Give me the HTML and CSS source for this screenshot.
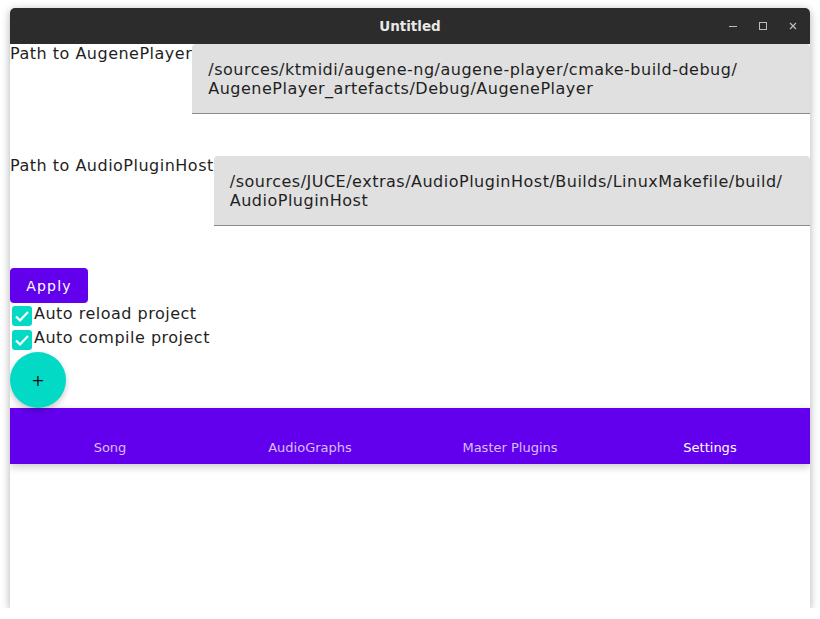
FILE: index.html
```html
<!DOCTYPE html>
<html>
<head>
<meta charset="utf-8">
<title>Untitled</title>
<link rel="stylesheet" href="styles.css">
</head>
<body>
<div class="window">
  <div class="titlebar">
    <span class="title">Untitled</span>
    <div class="controls">
      <svg class="ctl" width="10" height="10" viewBox="0 0 10 10"><path d="M1 5.5h8" stroke="#bdbdbd" stroke-width="1"/></svg>
      <svg class="ctl" width="10" height="10" viewBox="0 0 10 10"><rect x="1.5" y="1.5" width="7" height="7" fill="none" stroke="#bdbdbd" stroke-width="1"/></svg>
      <svg class="ctl" width="10" height="10" viewBox="0 0 10 10"><path d="M2 2l6 6M8 2l-6 6" stroke="#bdbdbd" stroke-width="1.2"/></svg>
    </div>
  </div>
  <div class="content">
    <div class="row">
      <div class="label">Path to AugenePlayer</div>
      <div class="field">/sources/ktmidi/augene-ng/augene-player/cmake-build-debug/<br>AugenePlayer_artefacts/Debug/AugenePlayer</div>
    </div>
    <div class="row">
      <div class="label">Path to AudioPluginHost</div>
      <div class="field">/sources/JUCE/extras/AudioPluginHost/Builds/LinuxMakefile/build/<br>AudioPluginHost</div>
    </div>
    <button class="apply">Apply</button>
    <div class="check"><span class="box"><svg width="20" height="20" viewBox="0 0 20 20"><path d="M4 10.5l4 4 8-8.5" fill="none" stroke="#fff" stroke-width="2.2"/></svg></span>Auto reload project</div>
    <div class="check"><span class="box"><svg width="20" height="20" viewBox="0 0 20 20"><path d="M4 10.5l4 4 8-8.5" fill="none" stroke="#fff" stroke-width="2.2"/></svg></span>Auto compile project</div>
    <div class="fab">+</div>
    <nav class="tabs">
      <div class="tab">Song</div>
      <div class="tab">AudioGraphs</div>
      <div class="tab">Master Plugins</div>
      <div class="tab active">Settings</div>
    </nav>
  </div>
</div>
</body>
</html>
```
FILE: styles.css
```css
html, body {
  margin: 0;
  padding: 0;
  background: #ffffff;
}
body {
  font-family: "DejaVu Sans", sans-serif;
  padding: 8px 10px 0 10px;
}
.window {
  width: 800px;
  height: 600px;
  background: #ffffff;
  border-radius: 5px 5px 0 0;
  box-shadow: 0 2px 8px rgba(0,0,0,0.32);
  overflow: hidden;
  display: flex;
  flex-direction: column;
}
.titlebar {
  height: 36px;
  background: #2c2c2c;
  display: flex;
  align-items: center;
  justify-content: center;
  position: relative;
  flex: none;
}
.title {
  color: #e8e8e8;
  font-weight: bold;
  font-size: 13.5px;
}
.controls {
  position: absolute;
  right: 12px;
  top: 13px;
  display: flex;
  gap: 20px;
}
.ctl { display: block; }
.content {
  flex: 1;
  display: flex;
  flex-direction: column;
  align-items: flex-start;
  color: #1f1f1f;
  letter-spacing: 0.5px;
}
.row {
  display: flex;
  width: 100%;
  margin-bottom: 42px;
}
.label {
  font-size: 16px;
  line-height: 19px;
  white-space: nowrap;
}
.field {
  flex: 1;
  background: #e0e0e0;
  border-radius: 4px 4px 0 0;
  border-bottom: 1px solid #8a8a8a;
  font-size: 16px;
  line-height: 19px;
  padding: 16px 16px 15px 16px;
  color: #1f1f1f;
}
.apply {
  font-family: "DejaVu Sans", sans-serif;
  background: #6200ee;
  color: #ffffff;
  border: none;
  border-radius: 4px;
  font-size: 14px;
  letter-spacing: 1.2px;
  width: 78px;
  height: 35px;
  padding: 0;
  margin: 0 0 1px 0;
}
.check {
  display: flex;
  align-items: flex-start;
  height: 24px;
  font-size: 16px;
  line-height: 19px;
  padding-left: 2px;
}
.box {
  width: 20px;
  height: 20px;
  background: #03dac6;
  border-radius: 3px;
  margin: 2px 2px 0 0;
  display: flex;
}
.fab {
  width: 56px;
  height: 56px;
  border-radius: 50%;
  background: #03dac6;
  display: flex;
  align-items: center;
  justify-content: center;
  font-size: 16px;
  color: #111;
  box-shadow: 0 3px 6px rgba(0,0,0,0.22);
  position: relative;
  z-index: 1;
  letter-spacing: 0;
}
.tabs {
  width: 100%;
  height: 56px;
  background: #6200ee;
  display: grid;
  grid-template-columns: repeat(4, 1fr);
  box-shadow: 0 3px 8px rgba(0,0,0,0.2);
  letter-spacing: 0;
}
.tab {
  display: flex;
  align-items: flex-end;
  justify-content: center;
  padding-bottom: 9px;
  font-size: 13px;
  color: rgba(255,255,255,0.75);
}
.tab.active {
  color: #ffffff;
}
```
